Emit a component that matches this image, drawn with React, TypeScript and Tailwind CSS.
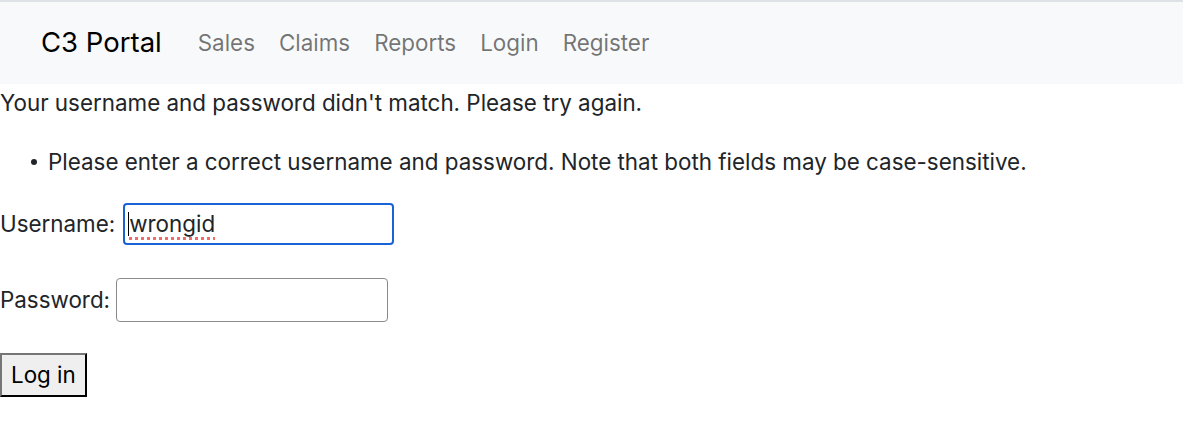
export default function App() {
  const links = ['Sales', 'Claims', 'Reports', 'Login', 'Register']

  return (
    <div className="min-h-[432px] bg-white text-[22.4px] text-[#212529] font-['Inter','Liberation_Sans',sans-serif]">
      <nav className="flex h-[84px] items-center border-t-2 border-[#dee2e6] bg-[#f8f9fa] px-[41px]">
        <a className="mr-[36px] text-[27.5px] text-black">C3 Portal</a>
        <ul className="flex gap-[24px]">
          {links.map((link) => (
            <li key={link} className="text-black/55">
              {link}
            </li>
          ))}
        </ul>
      </nav>

      <p className="mt-[2px] leading-[34px]">
        Your username and password didn't match. Please try again.
      </p>

      <ul className="mt-[25px] pl-[31px] leading-[34px]">
        <li className="flex items-center gap-[11px]">
          <span className="h-[6px] w-[6px] rounded-full bg-[#212529]" />
          Please enter a correct username and password. Note that both fields
          may be case-sensitive.
        </li>
      </ul>

      <form className="mt-[24px] flex flex-col items-start">
        <div className="flex items-center">
          <label htmlFor="username">Username:</label>
          <div className="ml-[8px] flex h-[42px] w-[271px] items-center rounded-[4px] border-2 border-[#1a62d6] px-[3px]">
            <span className="h-[24px] w-px bg-black" />
            <span className="underline decoration-dotted decoration-[#f06b6b] decoration-[3px] underline-offset-[5px]">
              wrongid
            </span>
          </div>
        </div>

        <div className="mt-[33px] flex items-center">
          <label htmlFor="password">Password:</label>
          <input
            id="password"
            type="password"
            className="ml-[6px] h-[44px] w-[272px] rounded-[4px] border border-[#8a8a8a] bg-white px-2"
          />
        </div>

        <button
          type="button"
          className="mt-[31px] h-[44px] border-2 border-b-black border-l-[#767676] border-r-black border-t-[#767676] bg-[#efefef] px-[9px] text-black"
        >
          Log in
        </button>
      </form>
    </div>
  )
}
